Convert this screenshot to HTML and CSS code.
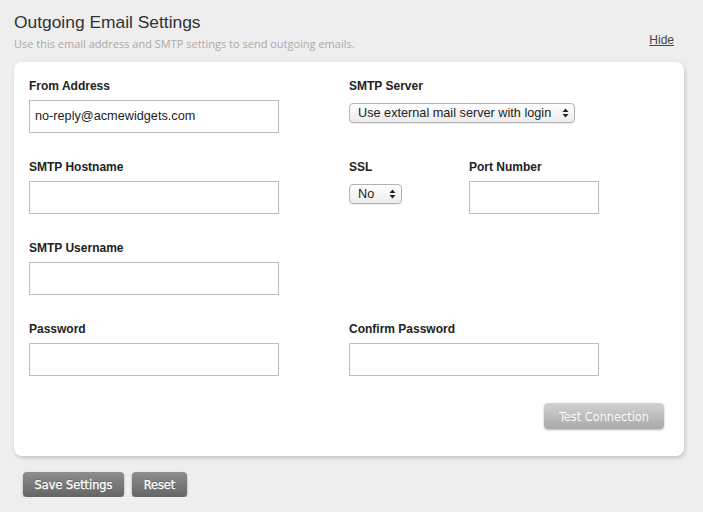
FILE: index.html
```html
<!DOCTYPE html>
<html>
<head>
<meta charset="utf-8">
<link rel="stylesheet" href="styles.css">
</head>
<body>
<div class="page">
  <div class="header">
    <div class="heading">
      <h1 class="title">Outgoing Email Settings</h1>
      <p class="subtitle">Use this email address and SMTP settings to send outgoing emails.</p>
    </div>
    <a class="hide-link" href="#">Hide</a>
  </div>

  <div class="card">
    <div class="grid">
      <div class="field">
        <label class="label">From Address</label>
        <div class="input wide">no-reply@acmewidgets.com</div>
      </div>
      <div class="field">
        <label class="label">SMTP Server</label>
        <div class="select server">
          <span class="select-text">Use external mail server with login</span>
          <svg class="arrows" width="7" height="10" viewBox="0 0 7 10"><path d="M3.5 0.5 L6.5 4 L0.5 4 Z M3.5 9.5 L6.5 6 L0.5 6 Z" fill="#222"/></svg>
        </div>
      </div>

      <div class="field">
        <label class="label">SMTP Hostname</label>
        <div class="input wide"></div>
      </div>
      <div class="field split">
        <div class="subfield ssl">
          <label class="label">SSL</label>
          <div class="select small">
            <span class="select-text">No</span>
            <svg class="arrows" width="7" height="10" viewBox="0 0 7 10"><path d="M3.5 0.5 L6.5 4 L0.5 4 Z M3.5 9.5 L6.5 6 L0.5 6 Z" fill="#222"/></svg>
          </div>
        </div>
        <div class="subfield">
          <label class="label">Port Number</label>
          <div class="input port"></div>
        </div>
      </div>

      <div class="field">
        <label class="label">SMTP Username</label>
        <div class="input wide"></div>
      </div>
      <div class="field"></div>

      <div class="field">
        <label class="label">Password</label>
        <div class="input wide"></div>
      </div>
      <div class="field">
        <label class="label">Confirm Password</label>
        <div class="input wide"></div>
      </div>
    </div>
    <div class="card-actions">
      <button class="btn btn-light">Test Connection</button>
    </div>
  </div>

  <div class="actions">
    <button class="btn btn-dark save">Save Settings</button>
    <button class="btn btn-dark reset">Reset</button>
  </div>
</div>
</body>
</html>
```
FILE: styles.css
```css
html, body {
  margin: 0;
  padding: 0;
  background: #eeeeee;
}
body {
  font-family: "Liberation Sans", Arial, sans-serif;
  color: #222;
}
.page {
  padding: 11px 19px 0 14px;
}
.header {
  display: flex;
  justify-content: space-between;
  align-items: flex-end;
  padding-right: 10px;
}
.title {
  margin: 0;
  font-size: 17.4px;
  line-height: 22px;
  font-weight: normal;
  color: #333;
}
.subtitle {
  margin: 4px 0 0 0;
  font-family: "Open Sans", sans-serif;
  font-size: 11px;
  line-height: 14px;
  color: #aaa;
}
.hide-link {
  font-size: 12px;
  line-height: 14px;
  color: #444;
  text-decoration: underline;
  margin-bottom: 4px;
}
.card {
  margin-top: 11px;
  background: #fff;
  border-radius: 8px;
  box-shadow: 1px 2px 4px rgba(0,0,0,0.18);
  padding: 17px 20px 27px 15px;
}
.grid {
  display: grid;
  grid-template-columns: 320px 1fr;
  row-gap: 27px;
}
.field {
  display: flex;
  flex-direction: column;
}
.field.split {
  flex-direction: row;
}
.subfield {
  display: flex;
  flex-direction: column;
}
.subfield.ssl {
  width: 120px;
}
.label {
  display: block;
  font-size: 12px;
  line-height: 14px;
  font-weight: bold;
  color: #222;
  margin-bottom: 7px;
}
.input {
  box-sizing: border-box;
  height: 33px;
  border: 1px solid #bdbdbd;
  background: #fff;
  font-size: 12.7px;
  line-height: 31px;
  padding: 0 5px;
  color: #222;
}
.input.wide { width: 250px; }
.input.port { width: 130px; }
.select {
  box-sizing: border-box;
  margin-top: 3px;
  height: 20px;
  display: flex;
  align-items: center;
  justify-content: space-between;
  border: 1px solid #b3b3b3;
  border-radius: 4px;
  background: linear-gradient(#ffffff, #ececec);
  box-shadow: 0 1px 1px rgba(0,0,0,0.08);
  padding: 0 5px 0 8px;
  font-size: 12.7px;
  color: #222;
}
.select.server { width: 226px; }
.select.small { width: 53px; }
.arrows { flex: none; }
.card-actions {
  display: flex;
  justify-content: flex-end;
  margin-top: 27px;
}
.btn {
  font-family: "DejaVu Sans Condensed", "DejaVu Sans", sans-serif;
  font-stretch: condensed;
  font-size: 12.6px;
  border: none;
  border-radius: 4px;
  padding: 0;
  cursor: pointer;
  -webkit-text-stroke: 0.3px currentColor;
}
.btn-light {
  width: 120px;
  height: 26px;
  color: #f8f8f8;
  background: linear-gradient(#d2d2d2, #a9a9a9);
  box-shadow: 0 1px 2px rgba(0,0,0,0.3);
  text-shadow: 0 0 1px rgba(0,0,0,0.35);
}
.actions {
  display: flex;
  gap: 8px;
  padding: 16px 0 0 9px;
}
.btn-dark {
  height: 25px;
  color: #fff;
  background: linear-gradient(#8e8e8e, #646464);
  box-shadow: 0 1px 2px rgba(0,0,0,0.4);
  text-shadow: 0 -1px 0 rgba(0,0,0,0.4);
}
.btn-dark.save { width: 101px; }
.btn-dark.reset { width: 55px; }
```
